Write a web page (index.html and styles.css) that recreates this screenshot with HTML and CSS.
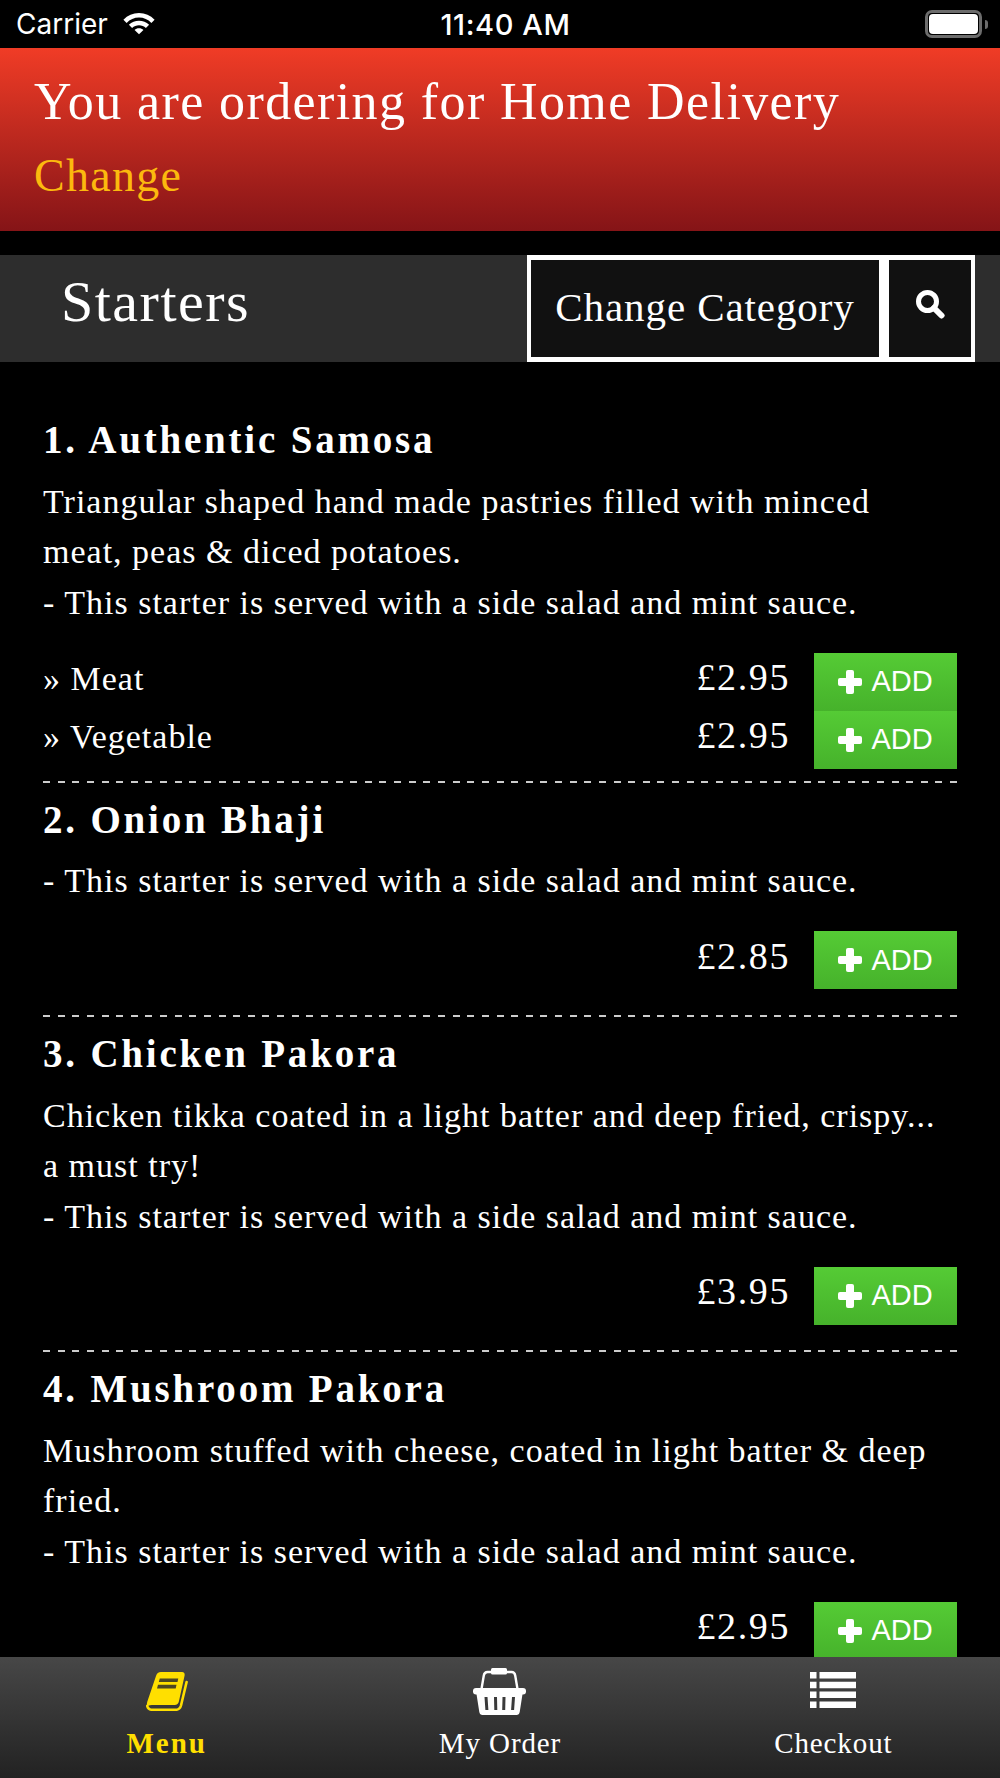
FILE: index.html
```html
<!DOCTYPE html>
<html lang="en">
<head>
<meta charset="utf-8">
<title>Starters</title>
<link rel="stylesheet" href="styles.css">
</head>
<body>
<div class="app">
  <header class="status">
    <div class="status-left">
      <span>Carrier</span>
      <svg class="wifi" viewBox="0 0 36 25" width="34" height="24"><path d="M18 2C11.500 2 6 4.500 1.500 9l3.400 3.400C8.400 9 13 6.800 18 6.800s9.600 2.200 13.100 5.600L34.500 9C30 4.500 24.500 2 18 2z" fill="#fff"/><path d="M18 10c-4 0-7.800 1.600-10.700 4.300l3.400 3.400c2-1.800 4.500-2.900 7.300-2.900s5.300 1.100 7.300 2.900l3.400-3.400C25.800 11.600 22 10 18 10z" fill="#fff"/><path d="M18 18c-1.900 0-3.500.7-4.700 1.800L18 24.500l4.700-4.700C21.500 18.700 19.900 18 18 18z" fill="#fff"/></svg>
    </div>
    <div class="status-time">11:40 AM</div>
    <div class="battery"><div class="battery-shell"><div class="battery-fill"></div></div><div class="battery-cap"></div></div>
  </header>
  <section class="banner">
    <div class="banner-title">You are ordering for Home Delivery</div>
    <div class="banner-change">Change</div>
  </section>
  <section class="catbar">
    <h1 class="cat-name">Starters</h1>
    <div class="cat-actions">
      <div class="cat-btn cat-change">Change Category</div>
      <div class="cat-btn cat-search">
        <svg viewBox="0 0 30 30" width="30" height="30"><circle cx="12.500" cy="12.500" r="9" fill="none" stroke="#fff" stroke-width="5"/><path d="M19 19l7.500 7.500" stroke="#fff" stroke-width="6" stroke-linecap="round"/></svg>
      </div>
    </div>
  </section>
  <main class="menu">
    <article class="item">
      <h2 class="item-title">1. Authentic Samosa</h2>
      <p class="item-desc">Triangular shaped hand made pastries filled with minced meat, peas &amp; diced potatoes.<br>- This starter is served with a side salad and mint sauce.</p>
      <div class="rows rows-multi">
        <div class="row"><span class="row-name">» Meat</span><span class="price">£2.95</span><button class="add"><svg class="plus" viewBox="0 0 24 24" width="24" height="24"><rect x="8" y="0" width="8" height="24" rx="2"/><rect x="0" y="8" width="24" height="8" rx="2"/></svg>ADD</button></div>
        <div class="row"><span class="row-name">» Vegetable</span><span class="price">£2.95</span><button class="add"><svg class="plus" viewBox="0 0 24 24" width="24" height="24"><rect x="8" y="0" width="8" height="24" rx="2"/><rect x="0" y="8" width="24" height="8" rx="2"/></svg>ADD</button></div>
      </div>
    </article>
    <article class="item">
      <h2 class="item-title">2. Onion Bhaji</h2>
      <p class="item-desc">- This starter is served with a side salad and mint sauce.</p>
      <div class="rows">
        <div class="row"><span class="row-name"></span><span class="price">£2.85</span><button class="add"><svg class="plus" viewBox="0 0 24 24" width="24" height="24"><rect x="8" y="0" width="8" height="24" rx="2"/><rect x="0" y="8" width="24" height="8" rx="2"/></svg>ADD</button></div>
      </div>
    </article>
    <article class="item">
      <h2 class="item-title">3. Chicken Pakora</h2>
      <p class="item-desc">Chicken tikka coated in a light batter and deep fried, crispy...<br>a must try!<br>- This starter is served with a side salad and mint sauce.</p>
      <div class="rows">
        <div class="row"><span class="row-name"></span><span class="price">£3.95</span><button class="add"><svg class="plus" viewBox="0 0 24 24" width="24" height="24"><rect x="8" y="0" width="8" height="24" rx="2"/><rect x="0" y="8" width="24" height="8" rx="2"/></svg>ADD</button></div>
      </div>
    </article>
    <article class="item">
      <h2 class="item-title">4. Mushroom Pakora</h2>
      <p class="item-desc">Mushroom stuffed with cheese, coated in light batter &amp; deep fried.<br>- This starter is served with a side salad and mint sauce.</p>
      <div class="rows">
        <div class="row"><span class="row-name"></span><span class="price">£2.95</span><button class="add"><svg class="plus" viewBox="0 0 24 24" width="24" height="24"><rect x="8" y="0" width="8" height="24" rx="2"/><rect x="0" y="8" width="24" height="8" rx="2"/></svg>ADD</button></div>
      </div>
    </article>
  </main>
  <nav class="tabs">
    <div class="tab tab-active">
      <div class="tab-icon icon-book">
        <svg viewBox="0 0 42 39" width="42" height="39"><path d="M15 0h21c2 0 3 1.500 2.600 3.500L33 29c-.5 2.500-2 4-4.500 4H8c-3 0-5.500 0-7 1.500-.3-1.500-.3-3 .2-4.500L10 4c.8-2.500 2.500-4 5-4z" fill="#ffdf00"/><path d="M40.600 10L35 33.500c-.8 3-2.500 4.300-5.500 4.300H6.500C3.500 37.800 1.800 36.500 1.200 34" fill="none" stroke="#ffdf00" stroke-width="2.600" stroke-linecap="round"/><path d="M13.800 6.500h18.500l-.8 3.600H12.800zM12 12.800h18.500l-.8 3.800H11z" fill="#4d4722"/></svg>
      </div>
      <span>Menu</span>
    </div>
    <div class="tab">
      <div class="tab-icon icon-basket">
        <svg viewBox="0 0 53 47" width="53" height="47"><path d="M8.500 21l2.300-13.500C11.100 5.500 12.300 4 14.500 4h24c2.200 0 3.400 1.500 3.700 3.500L44.500 21" fill="none" stroke="#fff" stroke-width="2.400"/><rect x="18" y="0" width="16" height="6.500" rx="1.500" fill="#fff"/><rect x="0" y="20" width="53" height="6.500" rx="3" fill="#fff"/><path d="M3.500 26h46l-2.800 18c-.3 1.800-1.500 3-3.200 3H9.500c-1.700 0-2.900-1.200-3.200-3z" fill="#fff"/><path d="M13 29l.9 13M22.500 29l.3 13M31 29l-.3 13M40.500 29l-.9 13" stroke="#3a3a3a" stroke-width="3"/></svg>
      </div>
      <span>My Order</span>
    </div>
    <div class="tab">
      <div class="tab-icon icon-list">
        <svg viewBox="0 0 46 36" width="46" height="36"><path d="M0 0h6.500v6.500H0zM9.500 0H46v6.500H9.500zM0 9.800h6.500v6.500H0zM9.500 9.800H46v6.500H9.500zM0 19.600h6.500v6.500H0zM9.500 19.600H46v6.500H9.500zM0 29.400h6.500V36H0zM9.500 29.400H46V36H9.500z" fill="#fff"/></svg>
      </div>
      <span>Checkout</span>
    </div>
  </nav>
</div>
</body>
</html>
```
FILE: styles.css
```css
* { box-sizing: border-box; }
html, body { margin: 0; padding: 0; background: #000; }
.app {
  width: 1000px; height: 1778px; display: flex; flex-direction: column;
  overflow: hidden; background: #000; color: #fff;
  font-family: "Liberation Serif", "Times New Roman", serif;
}
.status {
  height: 48px; flex: none; display: grid; grid-template-columns: 1fr auto 1fr;
  align-items: center; padding: 0 12px 0 16px;
  font-family: Inter, "Liberation Sans", sans-serif; font-size: 28px; font-weight: 400;
}
.status-left { display: flex; align-items: center; gap: 14px; }
.wifi { margin-top: -2px; }
.status-time { font-weight: 500; font-size: 29px; letter-spacing: .6px; padding-left: 7px; }
.battery { justify-self: end; display: flex; align-items: center; gap: 3px; }
.battery-shell { width: 57px; height: 28px; border: 3px solid #6c6c6c; border-radius: 7px; padding: 1px; }
.battery-fill { width: 100%; height: 100%; background: #fff; border-radius: 4px; }
.battery-cap { width: 3px; height: 9px; background: #6c6c6c; border-radius: 0 3px 3px 0; }

.banner {
  height: 183px; flex: none; padding: 21px 34px 0;
  background: linear-gradient(#f03c26, #851417);
}
.banner-title { font-size: 52px; line-height: 66px; letter-spacing: 1.4px; }
.banner-change { font-size: 46px; line-height: 60px; margin-top: 11px; color: #fcb90e; letter-spacing: 1.3px; }

.catbar {
  margin-top: 24px; height: 107px; flex: none; background: #2d2d2d;
  display: flex; justify-content: space-between; align-items: stretch;
}
.cat-name { margin: 0; padding: 16px 0 0 61px; font-size: 58px; line-height: 62px; font-weight: 400; letter-spacing: 1.5px; }
.cat-actions { display: flex; margin-right: 25px; background: #fff; padding: 5px 4px; gap: 10px; }
.cat-btn { background: #111; display: flex; justify-content: center; }
.cat-change { width: 348px; font-size: 41px; line-height: 95px; letter-spacing: .9px; }
.cat-search { width: 82px; align-items: flex-start; padding-top: 29px; }

.menu { flex: 1; min-height: 0; overflow: hidden; padding: 0 43px; }
.item {
  padding-bottom: 2px;
  background: repeating-linear-gradient(90deg, #ccc 0 7px, transparent 7px 14.630px) left bottom / 100% 2px no-repeat;
}
.item:last-child { background: none; }
.item:first-child { padding-top: 50px; }
.item-title { margin: 0; font-size: 39px; line-height: 56px; font-weight: 700; letter-spacing: 2.8px; padding-top: 9px; }
.item:first-child .item-title { padding-top: 0; }
.item-desc { margin: 8.700px 0 0; padding-right: 4px; font-size: 34px; line-height: 50.500px; letter-spacing: 1px; }
.rows { margin-top: 24.500px; padding-bottom: 25.500px; }
.rows-multi { padding-bottom: 12px; }
.row { display: flex; align-items: center; height: 58px; }
.row-name { flex: 1; font-size: 34px; letter-spacing: 1px; margin-top: -6px; }
.price { font-size: 38px; letter-spacing: 1.6px; margin-right: 24px; margin-top: -9px; }
.add {
  width: 143px; height: 58px; border: 0; padding: 0; color: #fff;
  background: linear-gradient(#55cb35, #46b22b);
  font-family: "Liberation Sans", Arial, sans-serif; font-size: 29px;
  display: flex; align-items: center; justify-content: center; gap: 9px;
}
.plus { fill: #fff; flex: none; }

.tabs {
  height: 121px; flex: none; display: grid; grid-template-columns: repeat(3, 1fr);
  background: linear-gradient(#474747, #222);
}
.tab { display: flex; flex-direction: column; align-items: center; font-size: 29px; letter-spacing: .9px; }
.tab span { line-height: 40px; }
.tab-icon { height: 66px; }
.icon-book { padding-top: 15px; }
.icon-basket { padding-top: 11px; }
.icon-list { padding-top: 15px; }
.tab-active { color: #ffdf00; font-weight: 700; letter-spacing: 2px; }
```
